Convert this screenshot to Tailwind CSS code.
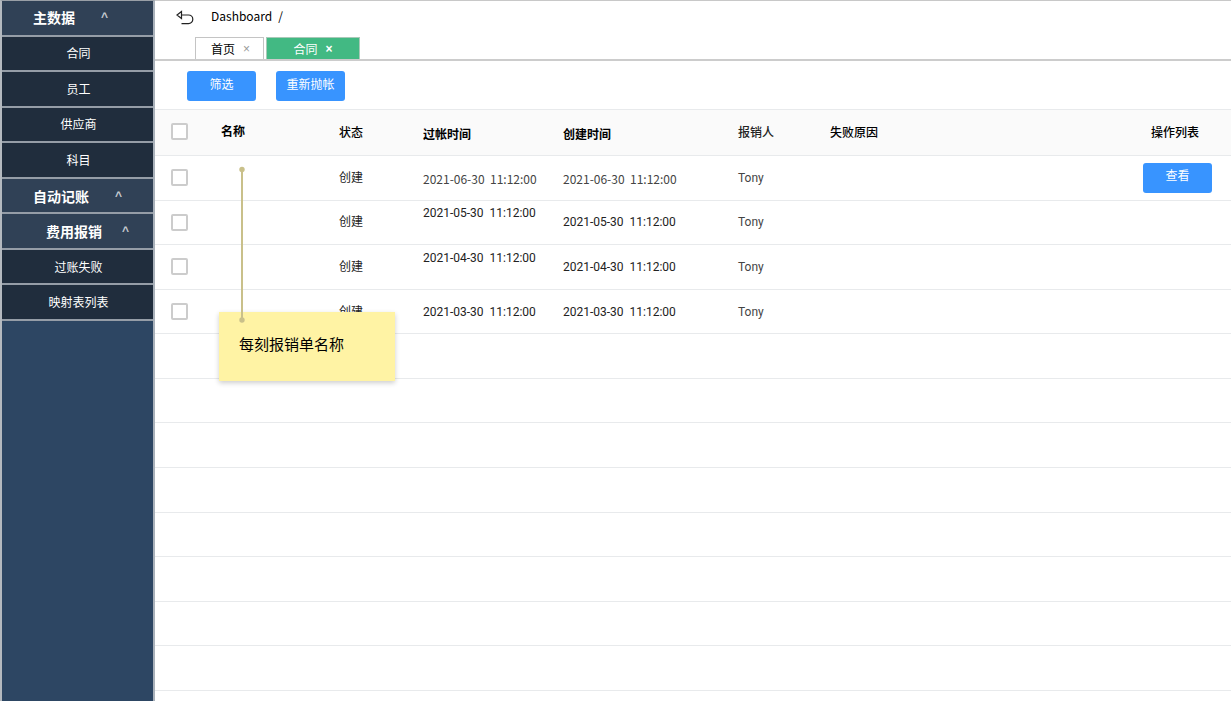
<!DOCTYPE html>
<html lang="zh-CN">
<head>
<meta charset="utf-8">
<meta name="viewport" content="width=device-width, initial-scale=1">
<title>合同</title>
<script src="https://cdn.jsdelivr.net/npm/@tailwindcss/browser@4"></script>
</head>
<body class="flex min-h-screen bg-white font-['Noto_Sans_CJK_SC',sans-serif] text-xs text-black">
<aside class="w-[155px] shrink-0 border-x-2 border-t border-l-[#b4b9bf] border-r-[#a9b1ba] border-t-[#999fa6] bg-[#2d4663]">
  <nav class="grid h-80 grid-rows-9 text-white">
    <button class="flex items-center border-b-2 border-[#959da7] bg-[#304156] pb-0.5 pl-[31px] text-sm font-bold">主数据<span class="ml-[26px] font-['Liberation_Sans',sans-serif] text-xs text-[#c5cad0]">^</span></button>
    <button class="border-b-2 border-[#959da7] bg-[#202d3d] pl-0.5">合同</button>
    <button class="border-b-2 border-[#959da7] bg-[#202d3d] pl-0.5">员工</button>
    <button class="border-b-2 border-[#959da7] bg-[#202d3d] pl-0.5">供应商</button>
    <button class="border-b-2 border-[#959da7] bg-[#202d3d] pl-0.5">科目</button>
    <button class="flex items-center border-b-2 border-[#959da7] bg-[#304156] pl-[31px] text-sm font-bold">自动记账<span class="ml-[26px] font-['Liberation_Sans',sans-serif] text-xs text-[#c5cad0]">^</span></button>
    <button class="flex items-center border-b-2 border-[#959da7] bg-[#304156] pl-11 text-sm font-bold">费用报销<span class="ml-5 font-['Liberation_Sans',sans-serif] text-xs text-[#c5cad0]">^</span></button>
    <button class="border-b-2 border-[#959da7] bg-[#202d3d] pl-0.5">过账失败</button>
    <button class="border-b-2 border-[#959da7] bg-[#202d3d] pl-0.5">映射表列表</button>
  </nav>
</aside>
<main class="relative min-w-0 grow border-t border-[#c8c8c8]">
  <header class="border-b-2 border-[#cccccc]">
    <div class="flex h-9 items-center gap-4 pb-1.5 pl-[21px]">
      <button aria-label="返回" class="pt-1">
        <svg class="h-4 w-[18px]" viewBox="0 0 18 16" fill="none" stroke="#222" stroke-width="1.2"><path d="M5.500 1.500 1 5l4.500 3.500zM5.500 5h7a4.300 4.300 0 0 1 0 8.600H5.500"/></svg>
      </button>
      <nav class="pl-px text-xs"><a href="#">Dashboard</a><span class="ml-1.5">/</span></nav>
    </div>
    <div class="flex h-[22px] gap-0.5 pl-10">
      <button class="flex w-[69px] items-center justify-center gap-2 border border-b-0 border-[#c4c4c4] pl-0.5">首页<span class="font-['Liberation_Sans',sans-serif] text-[#999]">×</span></button>
      <button class="flex w-[94px] items-center justify-center gap-2 border border-b-0 border-[#a9c9b8] bg-[#42b983] text-white">合同<span class="font-['Liberation_Sans',sans-serif] font-bold">×</span></button>
    </div>
  </header>
  <div class="flex h-12 items-center gap-5 pb-0.5 pl-8 pt-1">
    <button class="h-[30px] w-[69px] rounded-[3px] bg-[#3894ff] pb-1 text-white">筛选</button>
    <button class="h-[30px] w-[69px] rounded-[3px] bg-[#3894ff] pb-1 text-white">重新抛帐</button>
  </div>
  <table class="h-[582px] w-full table-fixed border-collapse text-left text-[#222]">
    <colgroup><col class="w-[66px]"><col class="w-[118px]"><col class="w-[84px]"><col class="w-[140px]"><col class="w-[175px]"><col class="w-[92px]"><col><col class="w-[88px]"></colgroup>
    <thead>
      <tr class="h-[46px] border-y border-[#e8eaec] bg-[#fafafa] text-black">
        <th class="pb-0.5 pl-4"><input type="checkbox" aria-label="全选" class="block size-[17px] appearance-none rounded-[2px] border-2 border-[#cccccc] bg-white"></th>
        <th class="pb-1 font-bold">名称</th><th class="pb-0.5 font-medium">状态</th><th class="pt-0.5 font-bold">过帐时间</th><th class="pt-0.5 font-bold">创建时间</th><th class="pb-0.5 font-medium text-[#222]">报销人</th><th class="pb-0.5 font-medium">失败原因</th><th class="pb-0.5 pl-2 font-medium">操作列表</th>
      </tr>
    </thead>
    <tbody class="font-[Roboto,'Noto_Sans_CJK_SC',sans-serif]">
      <tr class="h-11 border-b border-[#e8eaec]">
        <td class="pl-4"><input type="checkbox" aria-label="选择第1行" class="block size-[17px] appearance-none rounded-[2px] border-2 border-[#cccccc] bg-white"></td>
        <td></td><td>创建</td><td class="whitespace-pre pt-0.5 font-['Noto_Sans_CJK_SC',sans-serif] text-[#444]">2021-06-30  11:12:00</td><td class="whitespace-pre pt-0.5 font-['Noto_Sans_CJK_SC',sans-serif] text-[#444]">2021-06-30  11:12:00</td><td class="text-[#444]">Tony</td><td></td>
        <td><button class="block h-[30px] w-[69px] rounded-[3px] bg-[#3894ff] pb-1 text-white">查看</button></td>
      </tr>
      <tr class="h-11 border-b border-[#e8eaec]">
        <td class="pl-4"><input type="checkbox" aria-label="选择第2行" class="block size-[17px] appearance-none rounded-[2px] border-2 border-[#cccccc] bg-white"></td>
        <td></td><td>创建</td><td class="whitespace-pre pb-[18px]">2021-05-30  11:12:00</td><td class="whitespace-pre">2021-05-30  11:12:00</td><td class="text-[#444]">Tony</td><td></td><td></td>
      </tr>
      <tr class="h-11 border-b border-[#e8eaec]">
        <td class="pl-4"><input type="checkbox" aria-label="选择第3行" class="block size-[17px] appearance-none rounded-[2px] border-2 border-[#cccccc] bg-white"></td>
        <td></td><td>创建</td><td class="whitespace-pre pb-[18px]">2021-04-30  11:12:00</td><td class="whitespace-pre">2021-04-30  11:12:00</td><td class="text-[#444]">Tony</td><td></td><td></td>
      </tr>
      <tr class="h-11 border-b border-[#e8eaec]">
        <td class="pl-4"><input type="checkbox" aria-label="选择第4行" class="block size-[17px] appearance-none rounded-[2px] border-2 border-[#cccccc] bg-white"></td>
        <td></td><td>创建</td><td class="whitespace-pre">2021-03-30  11:12:00</td><td class="whitespace-pre">2021-03-30  11:12:00</td><td class="text-[#444]">Tony</td><td></td><td></td>
      </tr>
      <tr class="h-11 border-b border-[#e8eaec]"><td colspan="8"></td></tr>
      <tr class="h-11 border-b border-[#e8eaec]"><td colspan="8"></td></tr>
      <tr class="h-11 border-b border-[#e8eaec]"><td colspan="8"></td></tr>
      <tr class="h-11 border-b border-[#e8eaec]"><td colspan="8"></td></tr>
      <tr class="h-11 border-b border-[#e8eaec]"><td colspan="8"></td></tr>
      <tr class="h-11 border-b border-[#e8eaec]"><td colspan="8"></td></tr>
      <tr class="h-11 border-b border-[#e8eaec]"><td colspan="8"></td></tr>
      <tr class="h-11 border-b border-[#e8eaec]"><td colspan="8"></td></tr>
    </tbody>
  </table>
  <div class="absolute left-16 top-[311px] h-[69px] w-[176px] bg-[#fff3a4] px-5 pt-5 text-[15px] leading-6 text-black shadow-[0_2px_5px_rgba(0,0,0,0.2)]">每刻报销单名称</div>
  <svg class="absolute left-[84px] top-[165px] h-[158px] w-[6px]" viewBox="0 0 6 158" fill="#c9c08a"><circle cx="3" cy="3.500" r="2.700"/><path d="M2 3h2v151H2z"/><circle cx="3" cy="154" r="2.700"/></svg>
</main>
</body>
</html>
